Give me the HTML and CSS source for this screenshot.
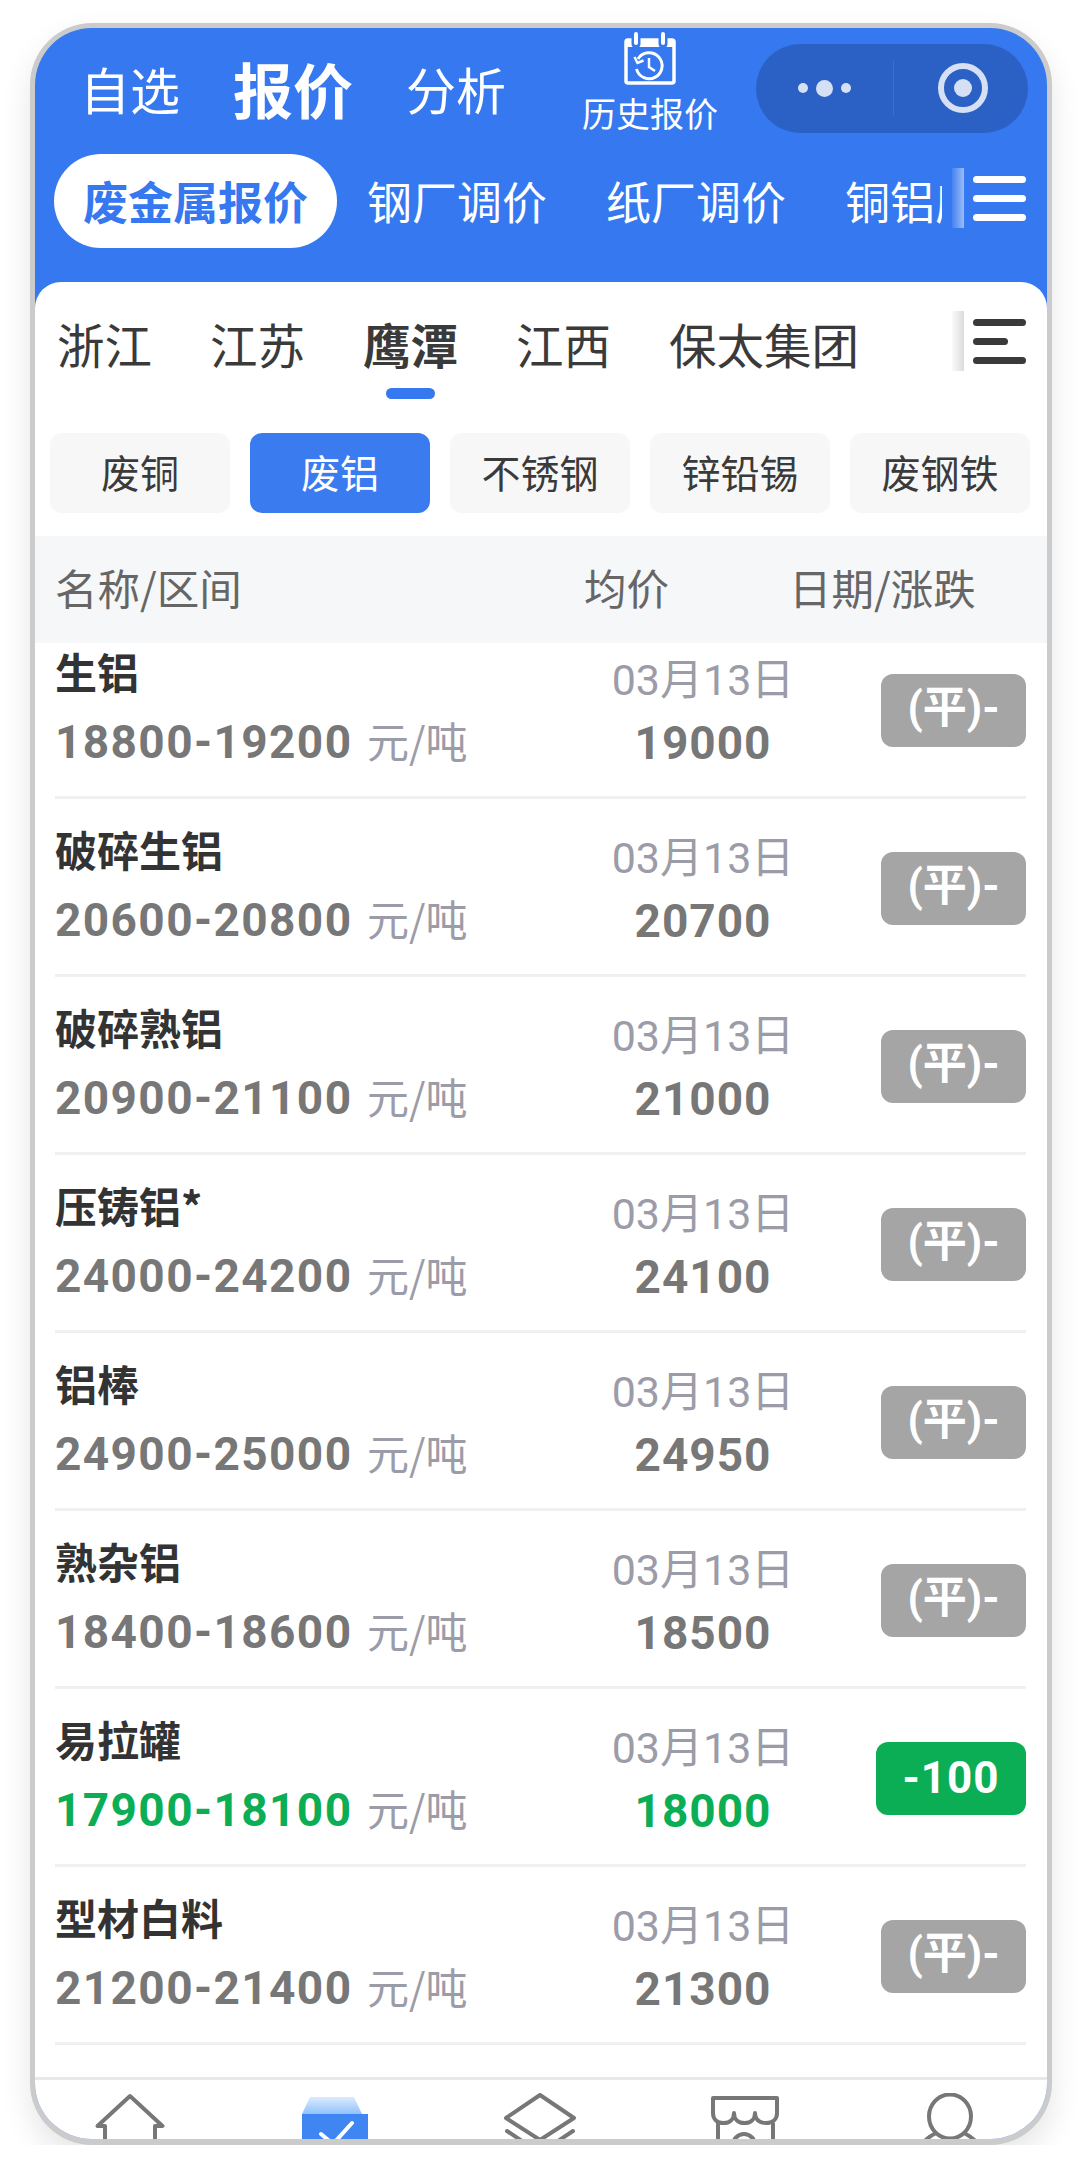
FILE: index.html
```html
<!DOCTYPE html>
<html lang="zh-CN">
<head>
  <meta charset="UTF-8">
  <meta name="viewport" content="width=device-width, initial-scale=1.0">
  <title>报价</title>
  <link rel="stylesheet" href="styles.css">
</head>
<body>
  <div class="phone">
    <div class="topbar">
      <span class="top-tab">自选</span>
      <span class="top-tab active">报价</span>
      <span class="top-tab">分析</span>
      <div class="history">
        <svg width="60" height="60" viewBox="0 0 60 60" fill="none" stroke="#fff" stroke-width="3">
          <rect x="6" y="10" width="48" height="43" rx="2" stroke-width="3.5"/>
          <rect x="6" y="10" width="48" height="7" fill="#fff" stroke="none"/>
          <path d="M16 3V14M43 3V14" stroke="#3578f0" stroke-width="9" stroke-linecap="round"/>
          <path d="M16 4V13M43 4V13" stroke-width="4" stroke-linecap="round"/>
          <path d="M18 29A13 13 0 1 1 16.5 39"/>
          <path d="M14.500 27L17.500 33L23.500 30.500" stroke-width="2.500"/>
          <path d="M29 28V37L35 41" stroke-width="2.500"/>
        </svg>
        <span>历史报价</span>
      </div>
      <div class="capsule">
        <div class="capsule-dots"><i></i><i class="big"></i><i></i></div>
        <div class="capsule-ring"><i></i></div>
      </div>
    </div>

    <div class="subnav">
      <div class="subnav-scroll">
        <span class="sub-tab active">废金属报价</span>
        <span class="sub-tab">钢厂调价</span>
        <span class="sub-tab">纸厂调价</span>
        <span class="sub-tab">铜铝废料</span>
      </div>
      <div class="more light">
        <div class="fade"></div>
        <div class="bars"><i></i><i></i><i></i></div>
      </div>
    </div>

    <div class="card">
      <div class="regions">
        <div class="region">浙江</div>
        <div class="region">江苏</div>
        <div class="region active">鹰潭<i></i></div>
        <div class="region">江西</div>
        <div class="region">保太集团</div>
        <div class="more dark">
          <div class="fade"></div>
          <div class="bars"><i></i><i class="short"></i><i></i></div>
        </div>
      </div>

      <div class="chips">
        <div class="chip">废铜</div>
        <div class="chip active">废铝</div>
        <div class="chip">不锈钢</div>
        <div class="chip">锌铅锡</div>
        <div class="chip">废钢铁</div>
      </div>

      <div class="table-head">
        <span>名称/区间</span>
        <span>均价</span>
        <span>日期/涨跌</span>
      </div>

      <div class="list">
        <div class="row">
          <div><div class="name">生铝</div><div class="range"><b>18800-19200</b> <span>元/吨</span></div></div>
          <div class="mid"><div class="date">03月13日</div><div class="avg">19000</div></div>
          <div class="badge">(平)-</div>
        </div>
        <div class="row">
          <div><div class="name">破碎生铝</div><div class="range"><b>20600-20800</b> <span>元/吨</span></div></div>
          <div class="mid"><div class="date">03月13日</div><div class="avg">20700</div></div>
          <div class="badge">(平)-</div>
        </div>
        <div class="row">
          <div><div class="name">破碎熟铝</div><div class="range"><b>20900-21100</b> <span>元/吨</span></div></div>
          <div class="mid"><div class="date">03月13日</div><div class="avg">21000</div></div>
          <div class="badge">(平)-</div>
        </div>
        <div class="row">
          <div><div class="name">压铸铝*</div><div class="range"><b>24000-24200</b> <span>元/吨</span></div></div>
          <div class="mid"><div class="date">03月13日</div><div class="avg">24100</div></div>
          <div class="badge">(平)-</div>
        </div>
        <div class="row">
          <div><div class="name">铝棒</div><div class="range"><b>24900-25000</b> <span>元/吨</span></div></div>
          <div class="mid"><div class="date">03月13日</div><div class="avg">24950</div></div>
          <div class="badge">(平)-</div>
        </div>
        <div class="row">
          <div><div class="name">熟杂铝</div><div class="range"><b>18400-18600</b> <span>元/吨</span></div></div>
          <div class="mid"><div class="date">03月13日</div><div class="avg">18500</div></div>
          <div class="badge">(平)-</div>
        </div>
        <div class="row down">
          <div><div class="name">易拉罐</div><div class="range"><b>17900-18100</b> <span>元/吨</span></div></div>
          <div class="mid"><div class="date">03月13日</div><div class="avg">18000</div></div>
          <div class="badge">-100</div>
        </div>
        <div class="row">
          <div><div class="name">型材白料</div><div class="range"><b>21200-21400</b> <span>元/吨</span></div></div>
          <div class="mid"><div class="date">03月13日</div><div class="avg">21300</div></div>
          <div class="badge">(平)-</div>
        </div>
      </div>

      <div class="tabbar">
        <svg class="nav-icon" viewBox="0 0 80 80">
          <path d="M15 70V33H7.500L40 3L72.500 33H65V70"/>
        </svg>
        <svg class="nav-icon" viewBox="0 0 80 80">
          <defs>
            <linearGradient id="lid" x1="0" y1="0" x2="0" y2="1">
              <stop offset="0" stop-color="#dcebff"/>
              <stop offset="1" stop-color="#8fc2fb"/>
            </linearGradient>
          </defs>
          <path d="M15 4H59L67 21H7Z" fill="url(#lid)" stroke="none"/>
          <rect x="7" y="21" width="66" height="60" fill="#3f86f2" stroke="none"/>
          <path d="M26 41L38 51L57 30" stroke="#fff" stroke-linecap="round"/>
        </svg>
        <svg class="nav-icon" viewBox="0 0 80 80">
          <path d="M6 25L40 2L74 25L40 47Z"/>
          <path d="M7 38L40 60L73 38" stroke-linecap="round"/>
        </svg>
        <svg class="nav-icon" viewBox="0 0 80 80">
          <path d="M8 5H72V20C72 27 67 30 61 30C55 30 50 27 50 20C50 27 45 30 39.500 30C34 30 29 27 29 20C29 27 24 30 18.500 30C13 30 8 27 8 20Z"/>
          <path d="M13 30V70M68 30V70M28 70V52A11 11 0 0 1 50 52V70"/>
        </svg>
        <svg class="nav-icon" viewBox="0 0 80 80">
          <ellipse cx="40" cy="23.500" rx="21" ry="22"/>
          <path d="M26 40C14 46 6 56 4 70M54 40C66 46 74 56 76 70"/>
        </svg>
      </div>
    </div>
  </div>
</body>
</html>
```

FILE: styles.css
```css
body {
  margin: 0;
  background: #fff;
  font-family: "Noto Sans CJK SC", "Noto Sans", sans-serif;
}
.phone {
  box-sizing: border-box;
  width: 1022px;
  height: 2122px;
  margin: 23px 0 0 30px;
  border: 5px solid #cbcbcb;
  border-bottom-width: 6px;
  border-radius: 62px;
  background: #3578f0;
  box-shadow: 0 14px 30px rgba(0, 0, 0, 0.1);
  overflow: hidden;
  display: flex;
  flex-direction: column;
}

/* top bar */
.topbar {
  flex: none;
  height: 120px;
  padding-left: 45px;
  display: flex;
  align-items: center;
  gap: 53px;
  color: #fff;
}
.top-tab {
  font-size: 50px;
  line-height: 60px;
}
.top-tab.active {
  font-size: 60px;
  font-weight: bold;
}
.history {
  align-self: flex-start;
  margin: 2px 0 0 23px;
  display: flex;
  flex-direction: column;
  align-items: center;
  gap: 1px;
  font-size: 34px;
  line-height: 44px;
}
.history svg {
  display: block;
}
.capsule {
  margin-left: -15px;
  width: 272px;
  height: 89px;
  border-radius: 45px;
  background: #2b60c4;
  display: flex;
  align-items: center;
}
.capsule-dots {
  width: 137px;
  height: 56px;
  border-right: 1px solid #3a6dce;
  display: flex;
  align-items: center;
  justify-content: center;
  gap: 8px;
}
.capsule-dots i {
  width: 10px;
  height: 10px;
  border-radius: 50%;
  background: #d5e0f5;
}
.capsule-dots i.big {
  width: 17px;
  height: 17px;
}
.capsule-ring {
  box-sizing: border-box;
  width: 50px;
  height: 50px;
  margin-left: 44px;
  border: 6px solid #d5e0f5;
  border-radius: 50%;
  display: flex;
  align-items: center;
  justify-content: center;
}
.capsule-ring i {
  width: 18px;
  height: 18px;
  border-radius: 50%;
  background: #d5e0f5;
}

/* blue sub tabs */
.subnav {
  flex: none;
  height: 134px;
  padding: 6px 0 0 19px;
  box-sizing: border-box;
  display: flex;
  align-items: flex-start;
}
.subnav-scroll {
  width: 888px;
  height: 94px;
  overflow: hidden;
  display: flex;
  gap: 1px;
  align-items: center;
  white-space: nowrap;
}
.sub-tab {
  flex: none;
  padding: 0 29px;
  font-size: 45px;
  line-height: 94px;
  color: #fff;
}
.sub-tab.active {
  border-radius: 47px;
  background: #fff;
  color: #3578f0;
  font-weight: bold;
}
.more {
  display: flex;
  align-items: center;
  gap: 9px;
  margin-left: 10px;
}
.more.light {
  margin-top: 14px;
}
.more.dark {
  margin: 29px 21px 0 auto;
}
.fade {
  width: 12px;
  height: 60px;
}
.light .fade {
  background: linear-gradient(to right, rgba(255, 255, 255, 0.08), rgba(255, 255, 255, 0.5));
}
.dark .fade {
  background: linear-gradient(to right, rgba(220, 220, 220, 0.15), #dcdcdc);
}
.bars {
  width: 53px;
  display: flex;
  flex-direction: column;
  gap: 12px;
}
.bars i {
  display: block;
  height: 7px;
  border-radius: 4px;
  background: #fff;
}
.dark .bars i {
  background: #3a3a3a;
}
.dark .bars i.short {
  width: 35px;
}

/* white card */
.card {
  flex: 1;
  min-height: 0;
  border-radius: 26px 26px 0 0;
  background: #fff;
  display: flex;
  flex-direction: column;
}
.regions {
  flex: none;
  height: 151px;
  padding-left: 22px;
  box-sizing: border-box;
  display: flex;
  align-items: flex-start;
  gap: 58px;
}
.region {
  padding-top: 34px;
  font-size: 47.5px;
  line-height: 56px;
  color: #3a3a3a;
  display: flex;
  flex-direction: column;
  align-items: center;
  gap: 16px;
}
.region.active {
  font-weight: bold;
}
.region i {
  width: 49px;
  height: 11px;
  border-radius: 6px;
  background: #3578f0;
}
.chips {
  flex: none;
  padding: 0 17px 0 15px;
  display: grid;
  grid-template-columns: repeat(5, 1fr);
  gap: 20px;
}
.chip {
  height: 80px;
  border-radius: 12px;
  background: #f7f7f7;
  color: #3a3a3a;
  font-size: 39px;
  line-height: 76px;
  text-align: center;
}
.chip.active {
  background: #3b7bf0;
  color: #fff;
}
.table-head {
  flex: none;
  margin-top: 23px;
  height: 107px;
  padding: 0 0 6px 20px;
  box-sizing: border-box;
  background: #f6f7f9;
  display: grid;
  grid-template-columns: 529px 205px 1fr;
  align-items: center;
  font-size: 42.5px;
  color: #666;
}

/* price rows */
.list {
  flex: 1;
  min-height: 0;
  overflow: hidden;
}
.row {
  box-sizing: border-box;
  height: 178px;
  margin: 0 21px 0 20px;
  padding-top: 16px;
  border-bottom: 3px solid #f0f0f0;
  display: grid;
  grid-template-columns: 548px 200px 1fr;
}
.row:first-child {
  margin-top: -22px;
}
.name {
  font-size: 42px;
  font-weight: bold;
  line-height: 68px;
  color: #333;
}
.range {
  line-height: 70px;
  white-space: nowrap;
}
.range b,
.avg {
  font-family: Roboto, sans-serif;
  font-size: 46px;
  font-weight: bold;
  letter-spacing: 1.4px;
  color: #777;
}
.range span {
  margin-left: 11px;
  font-size: 42px;
  color: #9c9ca8;
}
.mid {
  margin-top: 9px;
  text-align: center;
}
.date {
  font-family: Roboto, "Noto Sans CJK SC", sans-serif;
  font-size: 43px;
  line-height: 68px;
  color: #9c9ca8;
}
.avg {
  letter-spacing: 1px;
  line-height: 58px;
}
.badge {
  justify-self: end;
  box-sizing: border-box;
  min-width: 145px;
  height: 73px;
  margin-top: 37px;
  border-radius: 12px;
  background: #a5a5a5;
  color: #fff;
  font-family: Roboto, "Noto Sans CJK SC", sans-serif;
  font-size: 44px;
  font-weight: bold;
  line-height: 68px;
  text-align: center;
}
.down .range b,
.down .avg {
  color: #0cae55;
}
.down .badge {
  min-width: 150px;
  background: #0cae55;
  font-size: 44px;
  letter-spacing: 1px;
  line-height: 73px;
}

/* bottom tabs, cut off by the frame */
.tabbar {
  flex: none;
  height: 62px;
  box-sizing: border-box;
  padding: 13px 57px 0 55px;
  border-top: 3px solid #e8e8e8;
  display: flex;
  justify-content: space-between;
  overflow: hidden;
}
.nav-icon {
  flex: none;
  width: 80px;
  height: 80px;
  fill: none;
  stroke: #777;
  stroke-width: 4;
  stroke-linejoin: round;
}
```
